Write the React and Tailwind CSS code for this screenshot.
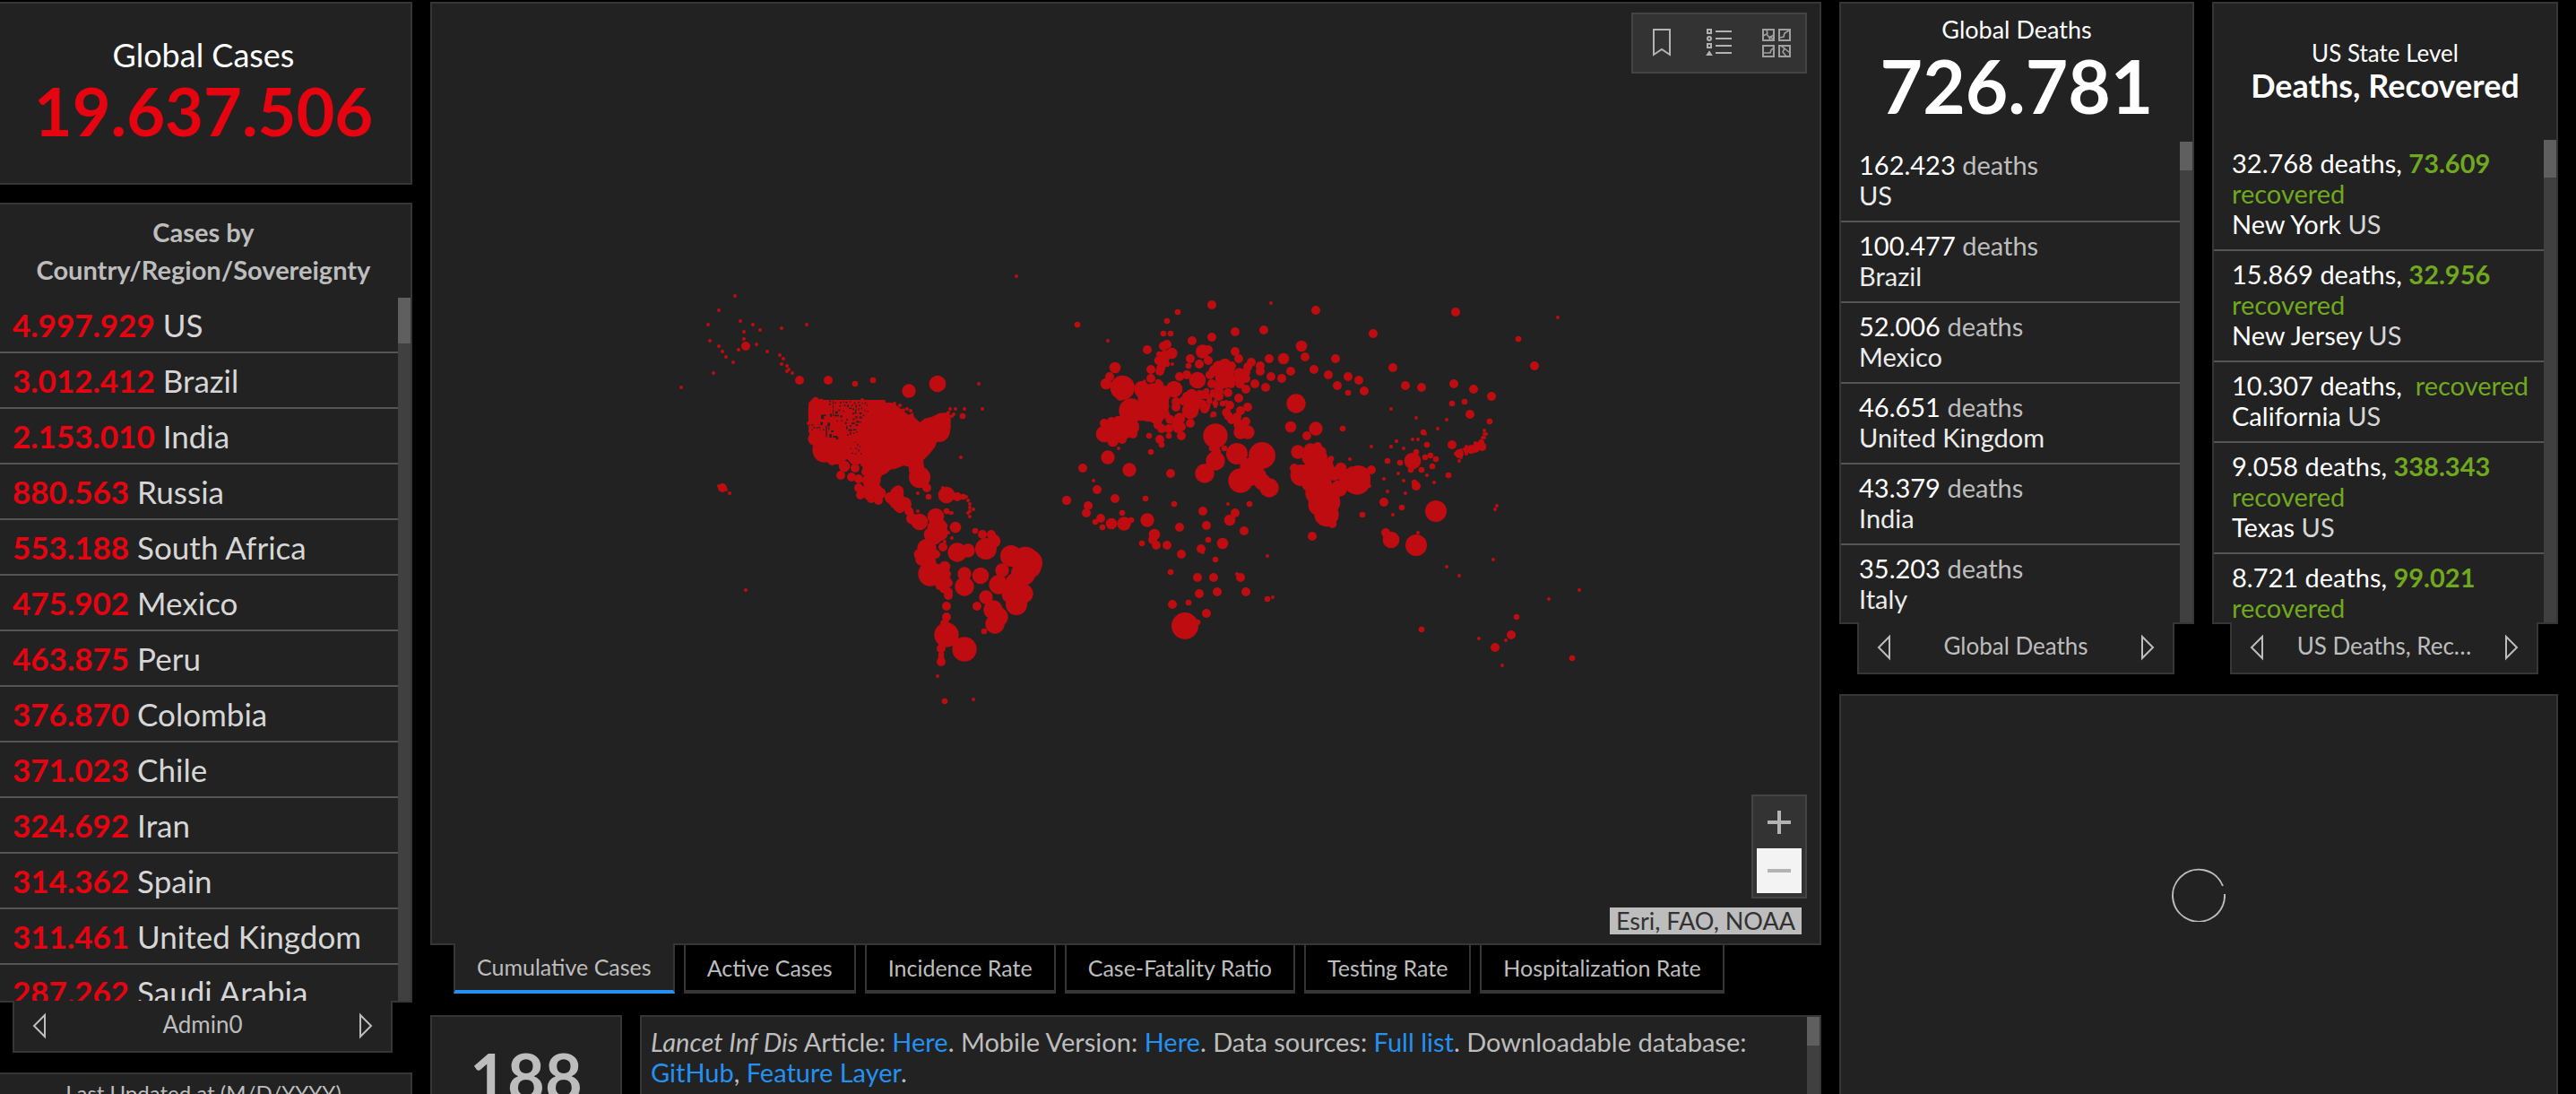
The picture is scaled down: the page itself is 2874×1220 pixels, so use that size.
import { useState } from 'react';

const countries = [
  { cases: '4.997.929', name: 'US' },
  { cases: '3.012.412', name: 'Brazil' },
  { cases: '2.153.010', name: 'India' },
  { cases: '880.563', name: 'Russia' },
  { cases: '553.188', name: 'South Africa' },
  { cases: '475.902', name: 'Mexico' },
  { cases: '463.875', name: 'Peru' },
  { cases: '376.870', name: 'Colombia' },
  { cases: '371.023', name: 'Chile' },
  { cases: '324.692', name: 'Iran' },
  { cases: '314.362', name: 'Spain' },
  { cases: '311.461', name: 'United Kingdom' },
  { cases: '287.262', name: 'Saudi Arabia' },
];

const globalDeaths = [
  { deaths: '162.423', name: 'US' },
  { deaths: '100.477', name: 'Brazil' },
  { deaths: '52.006', name: 'Mexico' },
  { deaths: '46.651', name: 'United Kingdom' },
  { deaths: '43.379', name: 'India' },
  { deaths: '35.203', name: 'Italy' },
];

const stateDeaths = [
  { deaths: '32.768', recovered: '73.609', name: 'New York' },
  { deaths: '15.869', recovered: '32.956', name: 'New Jersey' },
  { deaths: '10.307', recovered: '', name: 'California' },
  { deaths: '9.058', recovered: '338.343', name: 'Texas' },
  { deaths: '8.721', recovered: '99.021', name: 'Illinois' },
];

const mapTabs = [
  'Cumulative Cases',
  'Active Cases',
  'Incidence Rate',
  'Case-Fatality Ratio',
  'Testing Rate',
  'Hospitalization Rate',
];

// Case bubbles, grouped by region and radius: [radius, [x, y, x, y, ...]]
const americas = [
  [6, [
    1242, 84, 300, 150, 246, 198, 210, 246, 318, 234, 360, 246, 384, 264, 330, 270, 330, 294, 456, 258, 540, 246,
    216, 300, 246, 318, 258, 336, 270, 354, 294, 372, 312, 330, 372, 312, 408, 336, 450, 348, 462, 360, 456, 378,
    474, 384, 480, 396, 474, 402, 492, 408, 228, 408, 120, 456, 1116, 444, 1020, 528, 1038, 528, 1068, 528,
    1128, 528, 1014, 540, 1032, 546, 1026, 552, 1056, 690, 246, 786, 270, 798, 282, 810, 336, 1134, 912, 810,
    912, 870, 996, 792, 1074, 822, 1080, 834, 1086, 846, 1086, 858, 1086, 870, 1098, 864, 1080, 876, 1086, 888,
    1020, 876, 1026, 876, 1026, 960, 1014, 942, 1002, 972, 978, 1422, 1098, 1500, 834, 510, 852, 516, 876, 528,
    888, 534, 864, 532, 546, 576, 726, 498, 552, 600, 726, 714,
  ]],
  [10, [
    702, 444, 762, 432, 1062, 552, 948, 822, 1008, 870, 1002, 1506, 1134, 1272, 1104, 936, 990, 1350, 990, 1360,
    1064, 822, 1002, 920, 888, 872, 570, 498, 588, 504, 816, 516,
  ]],
  [15, [
    516, 432, 612, 432, 336, 318, 258, 792, 654, 750, 690, 756, 702, 726, 714, 762, 714, 792, 720, 816, 756, 828,
    780, 834, 738, 738, 942, 792, 882, 870, 852, 862, 1044, 822, 996, 990, 972, 1014, 1128, 948, 1158, 948,
    1008, 1080, 1014, 1110, 1014, 1152, 1008, 1188, 1008, 1224, 1002, 1246, 990, 1330, 990, 1374, 1110, 1188,
    986, 1120, 954, 1038, 1014, 1140, 1000, 1130, 1410, 834, 625, 702,
  ]],
  [19, [
    666, 720, 786, 810, 820, 825, 1038, 924, 892, 895, 990, 918, 1002, 1056, 918, 1015, 923, 1033, 1168, 972,
    700, 695, 846, 803, 740, 802, 750, 815,
  ]],
  [23, [
    882, 468, 567, 628, 842, 812, 868, 846, 832, 830, 850, 850, 1080, 1002, 1068, 1080, 1140, 1158, 1194, 1068,
    955, 948, 1166, 970, 770, 800, 850, 842, 950, 1040,
  ]],
  [28, [
    978, 444, 1008, 816, 918, 906, 972, 888, 972, 925, 985, 942, 965, 955, 1122, 1086, 985, 1075, 995, 1105,
    760, 765, 843, 836,
  ]],
  [32, [
    942, 995, 1044, 1008, 1068, 1122, 1164, 1200, 1170, 1248, 1182, 1224, 1182, 1116, 1266, 1146, 1225, 1148,
    1255, 1090, 582, 535,
  ]],
  [36, [918, 757, 1140, 996, 1242, 1182, 1224, 1020, 983, 603, 960, 592, 1242, 1110]],
  [41, [600, 666, 954, 1080, 1008, 1284, 1068, 1332, 630, 660, 1284, 1055, 1265, 1078]],
  [45, [1272, 1034, 1284, 1043]],
];

const africaEurope = [
  [6, [
    774, 174, 228, 300, 444, 378, 264, 660, 180, 768, 630, 846, 762, 1020, 660, 1080, 780, 1158, 546, 1008, 576, 551,
    571, 492, 571, 505, 588, 500, 588, 520, 588, 488, 566, 515, 640, 508, 624, 504, 535, 505, 545, 490, 350, 436,
  ]],
  [10, [
    462, 204, 426, 234, 126, 246, 414, 276, 438, 276, 498, 384, 558, 468, 612, 510, 582, 546, 366, 618, 432, 618,
    408, 648, 372, 672, 576, 660, 618, 660, 354, 828, 276, 876, 450, 846, 702, 846, 306, 900, 186, 906, 210, 924,
    342, 978, 564, 966, 588, 1032, 438, 1074, 498, 1176, 762, 1164, 528, 1242, 580, 472, 588, 510, 568, 502,
    560, 485, 560, 522, 400, 345, 426, 378, 346, 444, 396, 438, 578, 480,
  ]],
  [15, [
    576, 180, 924, 198, 750, 264, 654, 270, 576, 288, 510, 300, 360, 330, 654, 336, 666, 360, 708, 372, 738, 384,
    738, 402, 768, 360, 774, 420, 810, 426, 840, 402, 888, 354, 756, 456, 720, 444, 690, 462, 666, 492, 696, 522,
    672, 534, 636, 516, 630, 474, 504, 360, 564, 366, 534, 378, 564, 330, 492, 414, 468, 420, 372, 396, 372, 426,
    402, 402, 406, 390, 398, 366, 426, 312, 414, 318, 234, 420, 456, 504, 456, 522, 436, 563, 432, 594, 474, 618,
    504, 576, 402, 630, 408, 594, 396, 582, 216, 576, 240, 570, 276, 630, 312, 612, 144, 726, 192, 798, 252, 828,
    90, 834, 162, 852, 156, 876, 204, 894, 438, 744, 546, 870, 558, 918, 468, 924, 378, 966, 390, 984, 426, 984,
    474, 1014, 540, 996, 684, 936, 654, 876, 528, 1092, 582, 1092, 534, 1146, 594, 1140, 672, 1092, 690, 1140,
    444, 1182, 558, 1212, 690, 570, 660, 555, 625, 540, 632, 552, 642, 564, 570, 414, 576, 444, 670, 445,
    690, 426, 690, 405, 696, 388, 642, 384, 640, 444, 600, 470, 600, 486, 474, 588, 462, 594, 552, 528,
    550, 480, 535, 480, 492, 486, 270, 486, 400, 448, 416, 465, 422, 485, 418, 516, 420, 545, 262, 566,
    480, 502, 545, 512, 918, 396, 966, 414, 990, 360, 996, 450, 1032, 420, 1068, 432, 1086, 468, 1116, 276,
    1182, 390, 912, 954, 894, 618, 852, 726, 930, 654, 1110, 732, 979, 912, 1152, 840, 966, 708, 1044, 736,
    592, 672, 588, 662, 990, 792,
  ]],
  [10, [1032, 474, 1014, 594, 1164, 702, 1080, 882, 1044, 732, 975, 695]],
  [6, [1176, 528, 1110, 654, 1176, 654, 1038, 696, 1152, 762, 1104, 786, 1164, 804, 1182, 882, 1194, 636]],
  [19, [
    252, 390, 222, 444, 816, 360, 876, 318, 840, 588, 442, 342, 420, 350, 240, 912, 636, 900, 384, 948, 612, 978,
    468, 560, 245, 636, 668, 410, 672, 430, 508, 480, 600, 450, 620, 440, 585, 400, 310, 590, 412, 370, 1008, 726,
    460, 580, 620, 378, 498, 496, 668, 582, 940, 672,
  ]],
  [23, [
    545, 336, 228, 690, 300, 732, 282, 912, 360, 900, 864, 672, 672, 606, 696, 606, 924, 594, 340, 458, 245, 590,
    600, 390, 630, 395, 610, 425, 632, 428, 906, 666, 900, 780, 985, 745, 520, 500, 505, 510, 895, 760, 390, 465,
    1020, 750, 725, 762, 925, 855,
  ]],
  [28, [
    528, 432, 450, 462, 504, 534, 216, 612, 270, 580, 305, 588, 285, 600, 345, 465, 380, 470, 405, 520, 375, 500,
    1002, 794, 265, 605, 1176, 966, 720, 725, 730, 750, 905, 690, 935, 690, 510, 515, 340, 540, 390, 550, 1035, 755,
    698, 720, 745, 772,
  ]],
  [32, [858, 510, 552, 744, 588, 702, 768, 792, 955, 730, 300, 588, 360, 490, 700, 755, 355, 535, 375, 535, 400, 500]],
  [36, [660, 678, 875, 750, 710, 745, 925, 810, 910, 740, 365, 535, 935, 850, 910, 770, 940, 770]],
  [41, [277, 457, 306, 534, 588, 618, 672, 768, 960, 881, 965, 840, 940, 790, 935, 735, 1066, 758, 940, 840]],
  [45, [744, 684, 486, 1254, 1062, 770]],
];

const asiaPacific = [
  [6, [
    1014, 222, 540, 558, 642, 564, 612, 594, 528, 630, 546, 630, 570, 611, 474, 636, 456, 654, 498, 660, 480, 744,
    576, 750, 498, 768, 600, 774, 504, 810, 810, 852, 804, 864, 546, 942, 642, 1056, 684, 1086, 798, 1032,
    1086, 1134, 984, 1164, 840, 1302, 750, 1296, 828, 1386, 684, 702, 768, 600, 768, 612, 774, 612, 768, 624,
    762, 624, 756, 636, 738, 642, 708, 654, 690, 666, 708, 678, 672, 678, 690, 690, 702, 662,
  ]],
  [10, [
    882, 294, 660, 510, 702, 504, 786, 570, 564, 606, 576, 648, 540, 672, 570, 690, 588, 684, 606, 696, 594, 720,
    558, 732, 486, 708, 522, 732, 648, 750, 534, 774, 492, 858, 558, 1266, 876, 1224, 1062, 1362, 758, 640, 708, 666,
    686, 682, 748, 648,
  ]],
  [15, [
    672, 204, 936, 384, 504, 450, 558, 456, 666, 444, 732, 462, 792, 486, 720, 546, 660, 648, 540, 786, 438, 942,
    858, 1284, 804, 1326, 760, 654, 738, 660, 684, 678, 724, 664,
  ]],
  [28, [528, 702]],
  [36, [606, 870, 540, 984]],
];

// Counties with no reported cases show as gaps in the north-west
const gaps = [
  [588, 548, 10, 14], [598, 546, 6, 6], [604, 584, 4, 38], [586, 572, 8, 10], [610, 574, 8, 12], [612, 588, 4, 10],
  [548, 580, 4, 4], [556, 580, 6, 4], [562, 588, 6, 4], [572, 590, 6, 4], [580, 588, 6, 4], [556, 596, 4, 4],
  [594, 596, 5, 4], [584, 598, 4, 3], [616, 612, 8, 12], [628, 618, 14, 6], [638, 622, 8, 8], [622, 600, 8, 6],
  [616, 500, 5, 5], [616, 510, 4, 6], [627, 500, 3, 12], [627, 516, 3, 10], [627, 530, 3, 12], [627, 544, 3, 8],
  [634, 506, 5, 4], [636, 536, 8, 8], [632, 548, 16, 5], [618, 544, 6, 10], [652, 550, 8, 6], [646, 530, 6, 5],
  [652, 504, 4, 6], [650, 516, 4, 5], [662, 502, 3, 5], [670, 504, 6, 5], [664, 514, 6, 5], [676, 514, 5, 8],
  [684, 502, 4, 4], [690, 514, 5, 4], [682, 524, 8, 4], [698, 506, 5, 5], [704, 514, 4, 10], [694, 526, 5, 6],
  [702, 530, 4, 14], [694, 540, 6, 6], [712, 504, 5, 4], [714, 514, 6, 5], [712, 526, 4, 6], [716, 540, 8, 6],
  [722, 524, 4, 5], [724, 508, 5, 3], [734, 506, 5, 5], [740, 514, 4, 4], [732, 532, 5, 3], [742, 534, 4, 4],
  [728, 548, 5, 4], [716, 554, 10, 5], [704, 552, 5, 8], [694, 560, 6, 5], [706, 568, 10, 6], [690, 574, 12, 5],
  [672, 562, 6, 5], [668, 572, 6, 7], [672, 586, 4, 10], [684, 582, 6, 5], [680, 596, 12, 6], [696, 596, 10, 4],
  [704, 580, 8, 5], [718, 570, 4, 4], [684, 606, 5, 8], [676, 612, 4, 6], [696, 608, 4, 4], [706, 604, 4, 4],
  [708, 646, 5, 4], [716, 652, 4, 4], [704, 658, 4, 4], [712, 664, 4, 6], [690, 674, 5, 4], [702, 676, 4, 4],
  [720, 676, 4, 4], [686, 660, 3, 3], [700, 638, 3, 3], [640, 566, 4, 4], [656, 566, 4, 4], [662, 534, 4, 4],
];

const regions = [
  { id: 'americas', offset: 'translate(0 0)', groups: americas },
  { id: 'africa-europe', offset: 'translate(1320 0)', groups: africaEurope },
  { id: 'asia-pacific', offset: 'translate(2040 0)', groups: asiaPacific },
];

function Bubbles({ groups }) {
  return groups.map(([radius, points], i) => {
    const pairs = [];
    for (let p = 0; p < points.length; p += 2) {
      pairs.push([points[p], points[p + 1]]);
    }
    return (
      <g key={i}>
        {pairs.map(([x, y]) => (
          <circle key={`${x}-${y}`} cx={x} cy={y} r={radius} />
        ))}
      </g>
    );
  });
}

function CaseMap() {
  return (
    <svg viewBox="-714 -828 4644 3144" className="block h-full w-full" role="img" aria-label="Map of cumulative cases">
      <g fill="#be0c10">
        {regions.map((region) => (
          <g key={region.id} transform={region.offset}>
            <Bubbles groups={region.groups} />
          </g>
        ))}
        {/* Contiguous US, where county bubbles merge into one shape */}
        <path d="M547 507L562 492L590 498L802 498L806 508L830 508L848 522L866 536L880 548L896 540L900 556L919 573L935 560L958 555L984 542L1012 540L1022 550L1022 590L1018 612L975 640L970 655L957 672L940 690L930 700L934 725L882 740L882 722L865 718L835 729L820 731L808 743L793 750L780 770L780 792L735 790L724 768L736 745L722 712L708 714L684 706L676 696L648 714L620 712L590 690L560 640L547 605L545 540Z" />
      </g>
      <g fill="#222222">
        {gaps.map(([x, y, w, h]) => (
          <rect key={`${x}-${y}`} x={x} y={y} width={w} height={h} />
        ))}
      </g>
    </svg>
  );
}

function BookmarkIcon() {
  return (
    <svg viewBox="0 0 32 32" className="size-8" fill="none" stroke="#b3b3b3" strokeWidth="2">
      <path d="M7 1H25V29L16 23L7 29Z" />
    </svg>
  );
}

function LegendIcon() {
  return (
    <svg viewBox="0 0 32 32" className="size-8" fill="none" stroke="#b3b3b3" strokeWidth="2">
      <rect x="3" y="1" width="4" height="4" />
      <circle cx="5" cy="11" r="2" />
      <rect x="3" y="17" width="4" height="4" />
      <path d="M5 26L7 29H3Z" />
      <path d="M12 3H30M12 11H30M12 19H30M12 27H30" />
    </svg>
  );
}

function BasemapIcon() {
  return (
    <svg viewBox="0 0 32 32" className="size-8" fill="none" stroke="#a0a0a0" strokeWidth="2">
      <rect x="1" y="1" width="12" height="12" />
      <rect x="19" y="1" width="12" height="12" />
      <rect x="1" y="19" width="12" height="12" />
      <rect x="19" y="19" width="12" height="12" />
      <path strokeWidth="1.6" d="M1 8L5 6L8 10L13 7M5 1L6 6M8 13L9 9L13 12M20 10L24 9L25 5L30 2M2 27H9L10 24L13 21M21 19L25 22L23 26L27 31M25 22L31 27" />
    </svg>
  );
}

function Spinner() {
  return (
    <svg viewBox="0 0 60 60" className="size-[60px]" fill="none" stroke="#bdbdbd" strokeWidth="2">
      <path d="M59 29A29 29 0 1 1 57 20" />
    </svg>
  );
}

// Decorative scroll track; the thumb height is set per list
function ScrollTrack({ thumb }) {
  return (
    <div className="w-[14px] shrink-0 bg-[#404040]">
      <div className={`bg-[#5f5f5f] ${thumb}`} />
    </div>
  );
}

function PagerNav({ label, className }) {
  return (
    <nav className={`relative -mt-[2px] flex h-[58px] shrink-0 items-center justify-between border-2 border-t-0 border-[#363636] bg-[#222222] px-5 ${className}`}>
      <button type="button" aria-label="Previous">
        <svg viewBox="0 0 16 30" className="h-[30px] w-4" fill="none" stroke="#bdbdbd" strokeWidth="2">
          <path d="M14 3V27L2 15Z" />
        </svg>
      </button>
      <span className="truncate pb-1 text-[26px] leading-[34px] text-[#bdbdbd]">{label}</span>
      <button type="button" aria-label="Next">
        <svg viewBox="0 0 16 30" className="h-[30px] w-4" fill="none" stroke="#bdbdbd" strokeWidth="2">
          <path d="M2 3V27L14 15Z" />
        </svg>
      </button>
    </nav>
  );
}

function TextLink({ children }) {
  return <a href="#" className="text-[#2491f2]">{children}</a>;
}

export default function App() {
  const [activeTab, setActiveTab] = useState('Cumulative Cases');

  return (
    <div className="grid h-screen grid-cols-[460px_minmax(0,1fr)_802px] gap-5 overflow-hidden bg-black pt-[2px] pr-5 font-['Lato','Liberation_Sans',sans-serif] text-white">
      {/* Global cases and country list */}
      <div className="flex min-h-0 flex-col">
        <section className="flex h-[204px] shrink-0 flex-col items-center border-2 border-l-0 border-[#363636] bg-[#222222] pt-9 pr-1">
          <h2 className="text-[36px] leading-[42px]">Global Cases</h2>
          <p className="text-[74px] leading-[84px] font-bold text-[#e60410]">19.637.506</p>
        </section>

        <section className="mt-5 flex min-h-0 flex-1 flex-col border-2 border-l-0 border-[#363636] bg-[#222222]">
          <h2 className="h-[104px] shrink-0 pt-[10px] pr-1 text-center text-[29px] leading-[42px] font-bold text-[#bdbdbd]">
            Cases by
            <br />
            Country/Region/Sovereignty
          </h2>
          <div className="flex min-h-0 flex-1">
            <ul className="min-w-0 flex-1 overflow-hidden text-[35px] leading-[60px]">
              {countries.map((country) => (
                <li key={country.name} className="border-b-2 border-[#555555] pl-[14px] text-[#d6d6d6]">
                  <strong className="font-bold text-[#e60410]">{country.cases}</strong> {country.name}
                </li>
              ))}
            </ul>
            <ScrollTrack thumb="h-[51px]" />
          </div>
        </section>
        <PagerNav label="Admin0" className="mr-[22px] ml-[14px]" />

        <section className="mt-[22px] h-6 shrink-0 overflow-hidden border-2 border-b-0 border-l-0 border-[#363636] bg-[#222222] pt-1 pr-1 text-center text-[24px] leading-[34px] text-[#bdbdbd]">
          Last Updated at (M/D/YYYY)
        </section>
      </div>

      {/* Map and notes */}
      <div className="flex min-h-0 flex-col">
        <section className="relative min-h-0 flex-1 border-2 border-[#363636] bg-[#222222]">
          <CaseMap />
          <div className="absolute top-[10px] right-[14px] flex h-[68px] items-center gap-8 border-2 border-[#444444] bg-[#333333] px-4">
            <button type="button" aria-label="Bookmarks"><BookmarkIcon /></button>
            <button type="button" aria-label="Legend"><LegendIcon /></button>
            <button type="button" aria-label="Basemap gallery"><BasemapIcon /></button>
          </div>
          <div className="absolute right-[14px] bottom-[50px] flex w-[62px] flex-col border-2 border-[#444444] bg-[#333333] px-1 pb-1">
            <button type="button" aria-label="Zoom in" className="flex h-[58px] items-center justify-center">
              <svg viewBox="0 0 26 26" className="size-[26px]" stroke="#b3b3b3" strokeWidth="4">
                <path d="M0 13H26M13 0V26" />
              </svg>
            </button>
            <button type="button" aria-label="Zoom out" className="flex h-[50px] items-center justify-center bg-[#f3f3f3]">
              <svg viewBox="0 0 26 26" className="size-[26px]" stroke="#b3b3b3" strokeWidth="4">
                <path d="M0 13H26" />
              </svg>
            </button>
          </div>
          <div className="absolute right-5 bottom-[10px] bg-[#bdbdbd] px-[7px] text-[27px] leading-[30px] text-[#323232]">
            Esri, FAO, NOAA
          </div>
        </section>

        <div role="tablist" className="relative -mt-[2px] flex h-14 shrink-0 gap-[10px] px-[26px]">
          {mapTabs.map((tab) => (
            <button
              key={tab}
              type="button"
              role="tab"
              aria-selected={tab === activeTab}
              onClick={() => setActiveTab(tab)}
              className={`border-x-2 border-b-4 px-6 text-[25px] leading-[34px] whitespace-nowrap text-[#bdbdbd] ${
                tab === activeTab
                  ? 'border-x-[#363636] border-b-[#2491f2] bg-[#222222]'
                  : 'border-t-2 border-[#363636] bg-black'
              }`}
            >
              {tab}
            </button>
          ))}
        </div>

        <div className="mt-6 flex h-[88px] shrink-0 gap-5 overflow-hidden">
          <section className="w-[214px] border-2 border-b-0 border-[#363636] bg-[#222222] pt-6 text-center text-[72px] leading-[84px] font-bold text-[#bdbdbd]">
            188
          </section>
          <section className="flex min-w-0 flex-1 border-2 border-b-0 border-[#363636] bg-[#222222]">
            <div className="flex-1 px-[10px] pt-[11px] text-[29px] leading-[34px] text-[#bdbdbd]">
              <p>
                <em>Lancet Inf Dis</em> Article: <TextLink>Here</TextLink>. Mobile Version: <TextLink>Here</TextLink>. Data
                sources: <TextLink>Full list</TextLink>. Downloadable database:
                <br />
                <TextLink>GitHub</TextLink>, <TextLink>Feature Layer</TextLink>.
              </p>
              <p>
                Lead by JHU <TextLink>CSSE</TextLink>. Technical Support: <TextLink>Esri Living Atlas team</TextLink> and{' '}
                <TextLink>JHU APL</TextLink>. Financial Support:
              </p>
            </div>
            <ScrollTrack thumb="h-8" />
          </section>
        </div>
      </div>

      {/* Deaths, recovered and chart */}
      <div className="flex min-h-0 flex-col gap-[22px]">
        <div className="flex h-[750px] shrink-0 gap-5">
          <div className="flex w-[396px] flex-col">
            <section className="flex min-h-0 flex-1 flex-col border-2 border-[#363636] bg-[#222222]">
              <header className="h-[154px] shrink-0 pt-3 text-center">
                <h2 className="text-[27px] leading-[34px]">Global Deaths</h2>
                <p className="text-[82px] leading-[90px] font-bold">726.781</p>
              </header>
              <div className="flex min-h-0 flex-1">
                <ul className="min-w-0 flex-1 overflow-hidden text-[29px] leading-[34px]">
                  {globalDeaths.map((row) => (
                    <li key={row.name} className="border-b-2 border-[#555555] px-5 pt-[9px] pb-[11px]">
                      {row.deaths} <span className="text-[#bdbdbd]">deaths</span>
                      <div className="text-[#ebebeb]">{row.name}</div>
                    </li>
                  ))}
                </ul>
                <ScrollTrack thumb="h-8" />
              </div>
            </section>
            <PagerNav label="Global Deaths" className="mr-[22px] ml-5" />
          </div>

          <div className="flex min-w-0 flex-1 flex-col">
            <section className="flex min-h-0 flex-1 flex-col border-2 border-[#363636] bg-[#222222]">
              <header className="h-[152px] shrink-0 pt-[38px] text-center">
                <h2 className="text-[26px] leading-[34px]">US State Level</h2>
                <p className="text-[36px] leading-[38px] font-bold">Deaths, Recovered</p>
              </header>
              <div className="flex min-h-0 flex-1">
                <ul className="min-w-0 flex-1 overflow-hidden text-[29px] leading-[34px]">
                  {stateDeaths.map((row) => (
                    <li key={row.name} className="border-b-2 border-[#555555] pt-[9px] pr-2 pb-[11px] pl-5">
                      {row.deaths} deaths,{' '}
                      <strong className="font-bold text-[#70a81f]">{row.recovered}</strong>
                      {row.recovered ? <br /> : <>&nbsp;</>}
                      <span className="text-[#70a81f]">recovered</span>
                      <div>
                        {row.name} <span className="text-[#d6d6d6]">US</span>
                      </div>
                    </li>
                  ))}
                </ul>
                <ScrollTrack thumb="h-[42px]" />
              </div>
            </section>
            <PagerNav label="US Deaths, Rec…" className="mr-[22px] ml-5" />
          </div>
        </div>

        <section className="flex min-h-0 flex-1 items-center justify-center border-2 border-b-0 border-[#363636] bg-[#222222]" aria-busy="true">
          <Spinner />
        </section>
      </div>
    </div>
  );
}
